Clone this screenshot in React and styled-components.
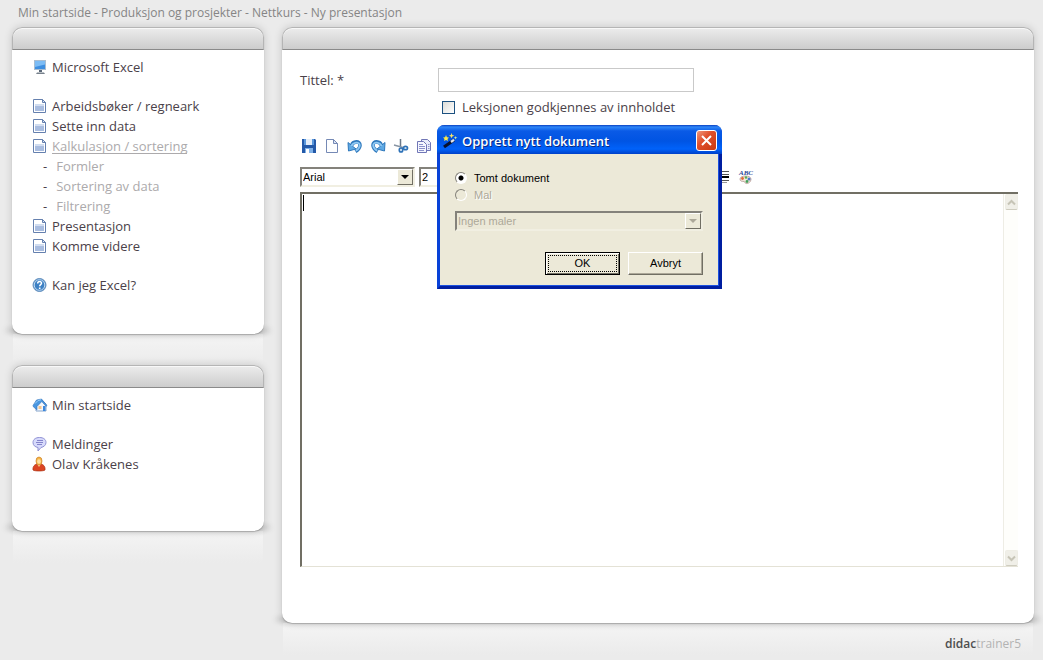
import React from 'react'
import styled, { createGlobalStyle } from 'styled-components'

const GlobalStyle = createGlobalStyle`
	* {
		box-sizing: border-box;
	}
	body {
		margin: 0;
		background-color: #ebebeb;
		color: #4a4149;
		font-family: 'Open Sans', 'Noto Sans', sans-serif;
		font-size: 13px;
	}
`

const Page = styled.div`
	display: flex;
	flex-direction: column;
	min-height: 100vh;
	padding: 3px 9px 6px 12px;
`

const Breadcrumb = styled.nav`
	padding: 0 6px;
	height: 24px;
	font-size: 12px;
	line-height: 20px;
	color: #858585;
`

const Crumb = styled.a`
	color: inherit;
	text-decoration: none;
`

const Columns = styled.div`
	display: flex;
	align-items: flex-start;
	gap: 18px;
`

const Sidebar = styled.aside`
	display: flex;
	flex: 0 0 252px;
	flex-direction: column;
	gap: 31px;
`

const Content = styled.main`
	flex: 1;
	min-width: 0;
`

const PanelWrapper = styled.section`
	position: relative;
	isolation: isolate;

	/* floor shadow that reaches out on both sides */
	&::before {
		content: '';
		position: absolute;
		z-index: -1;
		bottom: 0;
		left: -9px;
		right: -9px;
		height: 7px;
		background: linear-gradient(90deg, rgba(0, 0, 0, 0), rgba(0, 0, 0, 0.22) 16px, rgba(0, 0, 0, 0.22) calc(100% - 16px), rgba(0, 0, 0, 0));
		filter: blur(2px);
	}

	/* reflection */
	&::after {
		content: '';
		position: absolute;
		z-index: -1;
		top: 100%;
		left: 1px;
		right: 1px;
		height: 32px;
		background: linear-gradient(#e4e4e4, #f3f3f3 5px, #ebebeb);
	}
`

const Sheet = styled.div`
	border-radius: 10px;
	background-color: white;
	box-shadow: 0 0 8px rgba(0, 0, 0, 0.16), 0 1px 1px rgba(0, 0, 0, 0.2);
`

const PanelHeader = styled.div`
	height: 23px;
	border: 1px solid #b5b5b5;
	border-bottom-color: #8a8a8a;
	border-radius: 10px 10px 0 0;
	background: linear-gradient(#ececec, #cdcdcd);
	box-shadow: inset 0 1px 0 #f8f8f8;
`

const SidebarBody = styled.div`
	display: flex;
	flex-direction: column;
	gap: 19px;
	min-height: ${(props) => props.$minHeight};
	padding: 7px 20px;
`

const MenuList = styled.ul`
	margin: 0;
	padding: 0;
	list-style: none;
`

const MenuItem = styled.li`
	display: flex;
	align-items: center;
	height: 20px;
	padding-left: ${(props) => (props.$sub ? '11px' : '0')};
	gap: ${(props) => (props.$sub ? '9px' : '4px')};
`

const MenuLink = styled.a`
	height: 16px;
	line-height: 16px;
	color: ${(props) => (props.$muted ? '#acaaac' : '#4a4149')};
	border-bottom: ${(props) => (props.$current ? '1px solid #acaaac' : 'none')};
	text-decoration: none;
`

const EditorBody = styled.form`
	padding: 18px 16px 56px 18px;
`

const FormGrid = styled.div`
	display: grid;
	grid-template-columns: 138px 1fr;
	row-gap: 6px;
	align-items: center;
`

const TitleInput = styled.input`
	width: 256px;
	height: 24px;
	padding: 0 4px;
	border: 1px solid #c9c9c9;
	background-color: white;
	font: inherit;
`

const CheckRow = styled.div`
	display: flex;
	grid-column: 2;
	align-items: center;
	gap: 7px;
	height: 18px;
	padding-left: 4px;
`

const Checkbox = styled.input`
	appearance: none;
	width: 13px;
	height: 13px;
	margin: 0;
	border: 1px solid #1c5180;
	background: linear-gradient(135deg, #dcdcd7, white);
`

const Toolbar = styled.div`
	display: flex;
	align-items: center;
	gap: ${(props) => props.$gap};
	height: 20px;
	margin-top: ${(props) => props.$top};
	padding-left: ${(props) => props.$indent || '0'};
`

const ToolGroup = styled.div`
	display: flex;
	gap: 7px;
	margin-left: 252px;
`

const ToolButton = styled.button`
	width: 16px;
	height: 16px;
	padding: 0;
	border: 0;
	background: none;
`

const SelectBox = styled.div`
	display: flex;
	width: ${(props) => props.$width};
	height: 20px;
	border: 2px solid;
	border-color: #84827b #f1efe2 #f1efe2 #84827b;
	background-color: ${(props) => (props.$disabled ? '#ece9d8' : 'white')};
`

const Select = styled.select`
	appearance: none;
	flex: 1;
	min-width: 0;
	padding: 0 1px;
	border: 0;
	background: none;
	color: ${(props) => (props.disabled ? '#aca899' : 'black')};
	font-family: 'Liberation Sans', sans-serif;
	font-size: 11px;
	opacity: 1;
`

const SelectArrow = styled.span`
	display: flex;
	flex: 0 0 16px;
	align-items: center;
	justify-content: center;
	border: 1px solid;
	border-color: #fff #716f64 #716f64 #fff;
	background-color: #ece9d8;
	color: ${(props) => (props.$disabled ? '#aca899' : 'black')};
`

const Editor = styled.div`
	position: relative;
	display: flex;
	height: 375px;
	margin-top: 5px;
	border-top: 2px solid #716f64;
	border-left: 2px solid #716f64;
	border-bottom: 1px solid #e4e2d6;
`

const EditorText = styled.textarea`
	flex: 1;
	padding: 2px;
	border: 0;
	outline: 0;
	background-color: white;
	resize: none;
`

const Caret = styled.span`
	position: absolute;
	top: 1px;
	left: 1px;
	width: 1px;
	height: 16px;
	background-color: black;
`

const Scrollbar = styled.div`
	display: flex;
	flex: 0 0 15px;
	flex-direction: column;
	justify-content: space-between;
	padding: 0 0 0 1px;
	border-left: 1px solid #eeede5;
	background-color: #fefefb;
`

const ScrollButton = styled.button`
	display: flex;
	align-items: center;
	justify-content: center;
	height: 16px;
	padding: 0;
	border: 1px solid #eeede5;
	border-bottom-color: #cfcdc0;
	border-radius: 2px;
	background-color: #f0efe8;
`

const Footer = styled.footer`
	position: relative;
	padding: 11px 13px 0 0;
	font-size: 12px;
	line-height: 20px;
	text-align: right;
	color: #b3b3b3;
`

const Brand = styled.span`
	color: #4d4d4d;
	font-weight: 600;
`

const Dialog = styled.div`
	position: absolute;
	top: 125px;
	left: 437px;
	width: 285px;
	border: 3px solid #0842d8;
	border-top: 0;
	border-right-color: #001ea0;
	border-bottom-color: #001ea0;
	border-radius: 8px 8px 0 0;
	background-color: #ece9d8;
	box-shadow: inset -1px -1px 0 #1a50e0;
	color: black;
	font-family: 'Liberation Sans', sans-serif;
	font-size: 11px;
`

const TitleBar = styled.header`
	display: flex;
	align-items: center;
	gap: 4px;
	height: 29px;
	margin: 0 -3px;
	padding: 2px 5px 0 5px;
	border-radius: 7px 7px 0 0;
	background: linear-gradient(#0a3fc0, #2f87f8 2px, #0a5ae6 6px, #0054e3 16px, #0062fa 24px, #0040c8);
	color: white;
`

const DialogTitle = styled.h2`
	flex: 1;
	margin: 0;
	font-family: 'Open Sans', 'Noto Sans', sans-serif;
	font-size: 13px;
	font-weight: 600;
	text-shadow: 1px 1px 0 #0a2a80;
`

const CloseButton = styled.button`
	width: 21px;
	height: 21px;
	padding: 0;
	border: 1px solid white;
	border-radius: 3px;
	background: linear-gradient(135deg, #f0987c, #e0502c 40%, #c83810);
`

const DialogBody = styled.div`
	padding: 15px 16px 11px 15px;
`

const RadioRow = styled.label`
	display: flex;
	align-items: center;
	gap: 7px;
	height: 17px;
	color: ${(props) => (props.$disabled ? '#aca899' : 'black')};
	text-shadow: ${(props) => (props.$disabled ? '1px 1px 0 white' : 'none')};
`

const Radio = styled.input`
	appearance: none;
	width: 12px;
	height: 12px;
	margin: 0;
	border: 1px solid;
	border-color: #84827b #fff #fff #84827b;
	border-radius: 50%;
	background: ${(props) => (props.disabled ? '#ece9d8' : 'white')};

	&:checked {
		background: radial-gradient(circle, black 2px, white 3px);
	}
`

const TemplateRow = styled.div`
	margin: 8px 0 21px;
`

const DialogActions = styled.div`
	display: flex;
	justify-content: flex-end;
	gap: 8px;
`

const DialogButton = styled.button`
	width: 75px;
	height: 23px;
	padding: 2px;
	border: 1px solid;
	border-color: ${(props) => (props.$primary ? 'black' : '#fff #716f64 #716f64 #fff')};
	background-color: #ece9d8;
	box-shadow: ${(props) => (props.$primary ? 'inset 1px 1px 0 #fff, inset -1px -1px 0 #716f64' : 'inset -1px -1px 0 #aca899')};
	color: black;
	font: inherit;
`

const ButtonText = styled.span`
	display: block;
	height: 17px;
	line-height: 15px;
	border: 1px dotted ${(props) => (props.$focused ? 'black' : 'transparent')};
`

const Svg = styled.svg`
	display: block;
`

const Icon = ({ children }) => (
	<Svg width="16" height="16" viewBox="0 0 16 16" fill="none" aria-hidden="true">
		{children}
	</Svg>
)

const ComputerIcon = () => (
	<Icon>
		<rect x="2.5" y="1.5" width="11" height="9" fill="#3d8ee0" stroke="#a9bdd0" />
		<path d="M3 2h10v3.5L3 8z" fill="#7cbcf5" />
		<path d="M7 11h3v2H7z" fill="#5b6878" />
		<path d="M5 13.5h7l1 1.5H4z" fill="#77818c" />
	</Icon>
)

const PageIcon = () => (
	<Icon>
		<path d="M1.5 1.5h9l3 3v10h-12z" fill="#fff" stroke="#6580ae" />
		<path d="M10.5 1.5v3h3z" fill="#dce5f3" stroke="#6580ae" />
		<path d="M3 6h9v1H3z" fill="#cfdcf0" />
		<path d="M3 7.5h9V13H3z" fill="#a9bde0" />
	</Icon>
)

const HelpIcon = () => (
	<Icon>
		<circle cx="7.5" cy="8" r="6.5" fill="#3c80c4" stroke="#6590bd" />
		<circle cx="7.5" cy="8" r="5.3" stroke="#c2dbf2" />
		<path d="M5.7 6.5c0-2.700 4-2.500 3.800-.2-.1 1.400-1.800 1.300-1.800 3" stroke="#fff" strokeWidth="1.5" />
		<path d="M6.900 10.5h1.600V12H6.900z" fill="#fff" />
	</Icon>
)

const HomeIcon = () => (
	<Icon>
		<path d="M4 8v6h10V7l-4-4z" fill="#f4f7fb" stroke="#86a5cc" />
		<path d="M1 8.5 4.5 3l5-1L15 8.5l-1 .8-4.200-4.800L5 9.5v3.300L1.5 10z" fill="#4a97e0" stroke="#2f71ba" strokeWidth=".6" />
		<path d="m3 6.5 3-3 3-.7" stroke="#9dd0fa" />
		<path d="M6.5 9h3v3h-3z" fill="#f5c48c" />
		<path d="M11 9h2.5v5H11z" fill="#3a87dd" />
	</Icon>
)

const MessageIcon = () => (
	<Icon>
		<path d="M7.5 1.5c4 0 6.500 2 6.500 5 0 2.700-2.300 4.500-5 5L6 15v-3.500c-3-.5-5-2.200-5-5 0-3 2.500-5 6.500-5z" fill="#d7dafb" stroke="#8f90d4" />
		<path d="M5 4.500h6M4 6.500h7M5 8.500h5" stroke="#8584cc" />
	</Icon>
)

const UserIcon = () => (
	<Icon>
		<path d="M1 14c-.5-4 2-5.500 4-6h4c2 .5 4.500 2 4 6-1 1.300-11 1.300-12 0z" fill="#dc4522" stroke="#aa3013" strokeWidth=".7" />
		<path d="m5 8 2 3 2-3z" fill="#fbd08b" />
		<ellipse cx="7" cy="5" rx="3" ry="4" fill="#f7b648" stroke="#cb8126" strokeWidth=".7" />
		<ellipse cx="7" cy="5.500" rx="1.800" ry="2.300" fill="#fde0a2" />
	</Icon>
)

const SaveIcon = () => (
	<Icon>
		<path d="M1 1h13l1 1v13H1z" fill="#2459a8" />
		<path d="M4 1h8v6H4z" fill="#e4edf8" />
		<path d="M3 1h2v6H3zM11 1h2v6h-2z" fill="#5997dc" />
		<path d="M4 10h8v5H4z" fill="#7fb1e8" />
		<path d="M5 11h3v4H5z" fill="#fff" />
	</Icon>
)

const NewIcon = () => (
	<Icon>
		<path d="M2.5 1.5h7l4 4v9h-11z" fill="#fdfeff" stroke="#7589b5" />
		<path d="M9.5 1.5v4h4z" fill="#dbe5f5" stroke="#7589b5" />
	</Icon>
)

const UndoShape = () => (
	<>
		<path d="M4.500 7.500c1.500-4.500 8.500-5 8.500-.3 0 2.800-2 4.600-4.500 6.300" stroke="#2f79bd" strokeWidth="3.600" />
		<path d="M1 4.500 1.500 13l7.500-2z" fill="#5fa9e4" stroke="#2f79bd" />
		<path d="M4.500 8c1.500-4 8.300-4.600 8.300-.8 0 2.400-1.800 4.200-4 5.600" stroke="#8fc8f3" strokeWidth="1.800" />
	</>
)

const UndoIcon = () => (
	<Icon>
		<UndoShape />
	</Icon>
)

const RedoIcon = () => (
	<Icon>
		<g transform="matrix(-1 0 0 1 16 0)">
			<UndoShape />
		</g>
	</Icon>
)

const CutIcon = () => (
	<Icon>
		<path d="M7.500 1v8" stroke="#6b7889" strokeWidth="1.500" />
		<path d="m1 7 9 2.500" stroke="#8894a3" strokeWidth="1.500" />
		<ellipse cx="8" cy="12" rx="1.700" ry="2" stroke="#2e72b8" strokeWidth="1.700" />
		<ellipse cx="12.500" cy="10" rx="2" ry="1.700" stroke="#2e72b8" strokeWidth="1.700" />
	</Icon>
)

const CopyIcon = () => (
	<Icon>
		<path d="M5.500 1.500h6l3 3v8h-9z" fill="#e9edfb" stroke="#7076b6" />
		<path d="M1.500 3.500h6l3 3v8h-9z" fill="#f5f7ff" stroke="#7076b6" />
		<path d="M3 6.500h4M3 8.500h6M3 10.500h6M3 12.500h5M12 6.500h1.500M12 8.500h1.500M12 10.500h1.500" stroke="#8b91ca" />
	</Icon>
)

const AlignIcon = () => (
	<Icon>
		<path d="M1 2.500h13M1 5.500h13M1 11.500h13" stroke="#555" />
		<path d="M1 8h13" stroke="#000" strokeWidth="2" />
		<path d="M1 13.500h11" stroke="#999" />
	</Icon>
)

const SpellIcon = () => (
	<Icon>
		<text x="1" y="6" fill="#2a4796" fontFamily="Liberation Serif, serif" fontSize="7" fontStyle="italic" fontWeight="bold">
			ABC
		</text>
		<path d="M2 10c0-4 11-4 11 0 0 3-3 5-5 4.500-1.500-.4-.5-1.700-2-2-2-.2-4 0-4-2.500z" fill="#f2e7da" stroke="#b49793" strokeWidth=".8" />
		<circle cx="4.500" cy="9.500" r="1.400" fill="#de6a38" />
		<circle cx="8" cy="8.500" r="1.300" fill="#58ad56" />
		<circle cx="11" cy="10" r="1.500" fill="#4a79ce" />
		<circle cx="9" cy="12.500" r="1.400" fill="#43a05a" />
	</Icon>
)

const WandIcon = () => (
	<Icon>
		<path d="m2 14 10-7" stroke="#07112d" strokeWidth="3.200" />
		<path d="m9 8.900 3-2.100" stroke="#dfe5ee" strokeWidth="2.400" />
		<path d="m4 2 .9 2.200L7 4.500 5.500 6 6 8 4 7 2 8l.5-2L1 4.500l2.100-.3z" fill="#fbe94b" />
		<path d="m9.500 0 .8 2 2 .5-2 .9-.8 1.800-.8-1.800-1.700-.9 1.800-.5z" fill="#f6e268" />
		<path d="m13.500 3 .5 1.300 1.500.4-1.500.5-.5 1.300-.5-1.300-1.300-.5 1.300-.4z" fill="#d4e7a0" />
	</Icon>
)

const CloseIcon = () => (
	<Svg width="19" height="19" viewBox="0 0 19 19" aria-hidden="true">
		<path d="m5 5 9 9M14 5l-9 9" stroke="#fff" strokeWidth="2" />
	</Svg>
)

const DownArrow = () => (
	<svg width="8" height="4" viewBox="0 0 8 4" aria-hidden="true">
		<path d="M0 0h8L4 4z" fill="currentColor" />
	</svg>
)

const Chevron = ({ d }) => (
	<svg width="9" height="7" viewBox="0 0 9 7" fill="none" aria-hidden="true">
		<path d={d} stroke="#c6c4b6" strokeWidth="2" />
	</svg>
)

const crumbs = ['Min startside', 'Produksjon og prosjekter', 'Nettkurs', 'Ny presentasjon']

const courseMenu = [
	[{ label: 'Microsoft Excel', icon: ComputerIcon }],
	[
		{ label: 'Arbeidsbøker / regneark', icon: PageIcon },
		{ label: 'Sette inn data', icon: PageIcon },
		{ label: 'Kalkulasjon / sortering', icon: PageIcon, current: true },
		{ label: 'Formler', sub: true },
		{ label: 'Sortering av data', sub: true },
		{ label: 'Filtrering', sub: true },
		{ label: 'Presentasjon', icon: PageIcon },
		{ label: 'Komme videre', icon: PageIcon },
	],
	[{ label: 'Kan jeg Excel?', icon: HelpIcon }],
]

const userMenu = [
	[{ label: 'Min startside', icon: HomeIcon }],
	[
		{ label: 'Meldinger', icon: MessageIcon },
		{ label: 'Olav Kråkenes', icon: UserIcon },
	],
]

const tools = [
	['Lagre', SaveIcon],
	['Ny', NewIcon],
	['Angre', UndoIcon],
	['Gjenta', RedoIcon],
	['Klipp ut', CutIcon],
	['Kopier', CopyIcon],
]

const Panel = ({ children }) => (
	<PanelWrapper>
		<Sheet>
			<PanelHeader />
			{children}
		</Sheet>
	</PanelWrapper>
)

const Menu = ({ groups, minHeight }) => (
	<SidebarBody $minHeight={minHeight}>
		{groups.map((items) => (
			<MenuList key={items[0].label}>
				{items.map(({ label, icon: ItemIcon, sub, current }) => (
					<MenuItem key={label} $sub={sub}>
						{sub ? <span>-</span> : <ItemIcon />}
						<MenuLink href="#" $muted={sub || current} $current={current}>
							{label}
						</MenuLink>
					</MenuItem>
				))}
			</MenuList>
		))}
	</SidebarBody>
)

const DropDown = ({ label, value, width, disabled }) => (
	<SelectBox $width={width} $disabled={disabled}>
		<Select aria-label={label} disabled={disabled}>
			<option>{value}</option>
		</Select>
		<SelectArrow $disabled={disabled}>
			<DownArrow />
		</SelectArrow>
	</SelectBox>
)

const NewDocumentDialog = () => (
	<Dialog role="dialog" aria-labelledby="dialog-title">
		<TitleBar>
			<WandIcon />
			<DialogTitle id="dialog-title">Opprett nytt dokument</DialogTitle>
			<CloseButton type="button" aria-label="Lukk">
				<CloseIcon />
			</CloseButton>
		</TitleBar>
		<DialogBody>
			<RadioRow>
				<Radio type="radio" name="source" defaultChecked />
				Tomt dokument
			</RadioRow>
			<RadioRow $disabled>
				<Radio type="radio" name="source" disabled />
				Mal
			</RadioRow>
			<TemplateRow>
				<DropDown label="Mal" value="Ingen maler" width="248px" disabled />
			</TemplateRow>
			<DialogActions>
				<DialogButton type="button" $primary>
					<ButtonText $focused>OK</ButtonText>
				</DialogButton>
				<DialogButton type="button">
					<ButtonText>Avbryt</ButtonText>
				</DialogButton>
			</DialogActions>
		</DialogBody>
	</Dialog>
)

const App = () => (
	<>
		<GlobalStyle />
		<Page>
			<Breadcrumb>
				{crumbs.map((crumb, i) => (
					<React.Fragment key={crumb}>
						{i > 0 && ' - '}
						<Crumb href="#">{crumb}</Crumb>
					</React.Fragment>
				))}
			</Breadcrumb>
			<Columns>
				<Sidebar>
					<Panel>
						<Menu groups={courseMenu} minHeight="284px" />
					</Panel>
					<Panel>
						<Menu groups={userMenu} minHeight="143px" />
					</Panel>
				</Sidebar>
				<Content>
					<Panel>
						<EditorBody>
							<FormGrid>
								<label htmlFor="title">Tittel: *</label>
								<TitleInput id="title" type="text" />
								<CheckRow>
									<Checkbox id="approve" type="checkbox" />
									<label htmlFor="approve">Leksjonen godkjennes av innholdet</label>
								</CheckRow>
							</FormGrid>
							<Toolbar $top="20px" $gap="7px" $indent="1px">
								{tools.map(([label, ToolIcon]) => (
									<ToolButton key={label} type="button" aria-label={label}>
										<ToolIcon />
									</ToolButton>
								))}
							</Toolbar>
							<Toolbar $top="11px" $gap="4px">
								<DropDown label="Skrift" value="Arial" width="115px" />
								<DropDown label="Størrelse" value="2" width="40px" />
								<ToolGroup>
									<ToolButton type="button" aria-label="Juster">
										<AlignIcon />
									</ToolButton>
									<ToolButton type="button" aria-label="Stavekontroll">
										<SpellIcon />
									</ToolButton>
								</ToolGroup>
							</Toolbar>
							<Editor>
								<EditorText aria-label="Innhold" />
								<Caret />
								<Scrollbar>
									<ScrollButton type="button" aria-label="Rull opp">
										<Chevron d="m1 5.500 3.500-3.500L8 5.500" />
									</ScrollButton>
									<ScrollButton type="button" aria-label="Rull ned">
										<Chevron d="m1 1.500 3.500 3.500L8 1.500" />
									</ScrollButton>
								</Scrollbar>
							</Editor>
						</EditorBody>
					</Panel>
					<Footer>
						<Brand>didac</Brand>trainer5
					</Footer>
				</Content>
			</Columns>
		</Page>
		<NewDocumentDialog />
	</>
)

export default App
